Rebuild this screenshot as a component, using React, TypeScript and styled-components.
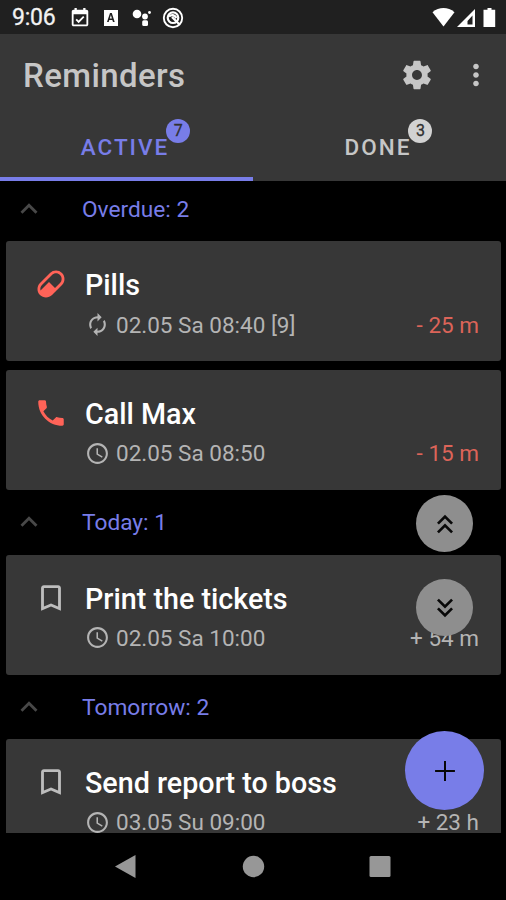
import React from 'react';
import styled, { createGlobalStyle } from 'styled-components';

const colors = {
  accent: '#787de8',
  surface: '#373737',
  statusBar: '#202020',
  muted: '#c6c6c6',
  secondary: '#b4b4b4',
  danger: '#ff6358',
  dangerText: '#dc6459',
};

const GlobalStyle = createGlobalStyle`
  *, *::before, *::after { box-sizing: border-box; }
  body { margin: 0; background: #000; }
`;

const Screen = styled.div`
  position: relative;
  display: flex;
  flex-direction: column;
  width: 506px;
  height: 900px;
  overflow: hidden;
  background: #000;
  font-family: Roboto, 'Liberation Sans', sans-serif;
`;

const Icon = styled.svg<{ $size: number }>`
  display: block;
  flex: none;
  width: ${(p) => p.$size}px;
  height: ${(p) => p.$size}px;
  fill: currentColor;
`;

const StatusBar = styled.header`
  display: flex;
  align-items: center;
  height: 34px;
  flex: none;
  padding: 1px 5px 0 12px;
  background: ${colors.statusBar};
  color: #fff;
`;

const Clock = styled.span`
  width: 57px;
  font-size: 23px;
  line-height: 32px;
  letter-spacing: -0.2px;
  color: #f2f2f2;
  -webkit-text-stroke: 0.3px #f2f2f2;
`;

const Notifications = styled.div`
  display: flex;
  align-items: center;
  flex: 1;
  gap: 9px;
`;

const StatusIcons = styled.div`
  display: flex;
  align-items: center;
  gap: 1px;
`;

const Toolbar = styled.div`
  display: flex;
  align-items: center;
  height: 79px;
  flex: none;
  padding: 3px 13px 0 23px;
  background: ${colors.surface};
  color: ${colors.muted};
`;

const Title = styled.h1`
  flex: 1;
  margin: 0;
  font-size: 33px;
  font-weight: 500;
  letter-spacing: 0.4px;
`;

const Actions = styled.div`
  display: flex;
  align-items: center;
  gap: 25px;
`;

const Tabs = styled.nav`
  display: flex;
  height: 68px;
  flex: none;
  background: ${colors.surface};
`;

const Tab = styled.div<{ $active?: boolean }>`
  display: flex;
  justify-content: center;
  align-items: center;
  flex: 1;
  padding: 3px 3px 0 0;
  color: ${(p) => (p.$active ? colors.accent : colors.muted)};
  border-bottom: 4px solid ${(p) => (p.$active ? colors.accent : 'transparent')};
`;

const TabLabel = styled.span`
  position: relative;
  font-size: 22.5px;
  font-weight: 500;
  line-height: 26px;
  letter-spacing: 2px;
`;

const Badge = styled.span<{ $active?: boolean }>`
  position: absolute;
  left: calc(100% - 3px);
  top: -15px;
  width: 24px;
  height: 24px;
  border-radius: 50%;
  background: ${(p) => (p.$active ? colors.accent : '#d2d2d2')};
  color: #303030;
  font-size: 16px;
  font-weight: 400;
  line-height: 24px;
  letter-spacing: 0;
  text-align: center;
  -webkit-text-stroke: 0.3px #303030;
`;

const List = styled.main`
  flex: none;
  height: 652px;
  overflow: hidden;
`;

const SectionHeader = styled.div`
  display: flex;
  align-items: center;
  height: 56px;
  padding-left: 12px;
  color: #484848;
`;

const SectionTitle = styled.h2`
  margin: 1px 0 0 36px;
  color: ${colors.accent};
  font-size: 22.7px;
  font-weight: 400;
`;

const Card = styled.article`
  display: grid;
  grid-template-columns: 51px 1fr;
  height: 120.2px;
  margin: 4.2px 5px 4.2px 6px;
  padding: 26px 22px 0 28px;
  border-radius: 3px;
  background: ${colors.surface};

  & + & {
    margin-top: 8.6px;
  }
`;

const TypeIcon = styled.div<{ $danger?: boolean }>`
  color: ${(p) => (p.$danger ? colors.danger : '#bdbdbd')};
`;

const CardTitle = styled.div`
  color: #fff;
  font-size: 28.7px;
  font-weight: 500;
  line-height: 36px;
`;

const Meta = styled.div`
  display: flex;
  align-items: center;
  height: 30px;
  margin-top: 6.4px;
  color: ${colors.secondary};
  font-size: 22.5px;
`;

const When = styled.span`
  flex: 1;
  margin-left: 6px;
`;

const Remaining = styled.span<{ $danger?: boolean }>`
  color: ${(p) => (p.$danger ? colors.dangerText : colors.secondary)};
`;

const NavBar = styled.footer`
  display: flex;
  justify-content: center;
  align-items: center;
  gap: 92px;
  flex: 1;
  color: #979797;
`;

const FloatingButtons = styled.div`
  position: absolute;
  right: 22px;
  top: 495px;
  display: flex;
  flex-direction: column;
  align-items: center;
  gap: 27px;
`;

const RoundButton = styled.button<{ $primary?: boolean }>`
  display: flex;
  justify-content: center;
  align-items: center;
  width: ${(p) => (p.$primary ? 79 : 57)}px;
  height: ${(p) => (p.$primary ? 79 : 57)}px;
  margin: ${(p) => (p.$primary ? '68px 0 0' : '0')};
  padding: 0;
  border: 0;
  border-radius: 50%;
  background: ${(p) => (p.$primary ? colors.accent : '#8e8e8e')};
  color: #080808;
`;

const paths = {
  pill: 'M4.22,11.29L11.29,4.22C13.64,1.88 17.43,1.88 19.78,4.22C22.12,6.56 22.12,10.36 19.78,12.71L12.71,19.78C10.36,22.12 6.56,22.12 4.22,19.78C1.88,17.43 1.88,13.64 4.22,11.29M5.64,12.71C4.59,13.75 4.24,15.24 4.6,16.57L10.59,10.59L14.83,14.83L18.36,11.29C19.93,9.73 19.93,7.2 18.36,5.64C16.8,4.07 14.27,4.07 12.71,5.64L5.64,12.71Z',
  call: 'M6.62 10.79c1.44 2.83 3.76 5.14 6.59 6.59l2.2-2.2c.27-.27.67-.36 1.02-.24 1.12.37 2.33.57 3.57.57.55 0 1 .45 1 1V20c0 .55-.45 1-1 1-9.39 0-17-7.61-17-17 0-.55.45-1 1-1h3.5c.55 0 1 .45 1 1 0 1.25.2 2.45.57 3.57.11.35.03.74-.25 1.02l-2.2 2.2z',
  bookmark: 'M17 3H7c-1.1 0-2 .9-2 2v16l7-3 7 3V5c0-1.1-.9-2-2-2zm0 15l-5-2.18L7 18V5h10v13z',
  repeat: 'M12 6v3l4-4-4-4v3c-4.42 0-8 3.58-8 8 0 1.57.46 3.03 1.24 4.26L6.7 14.8A5.87 5.87 0 0 1 6 12c0-3.31 2.69-6 6-6zm6.76 1.74L17.3 9.2c.44.84.7 1.79.7 2.8 0 3.31-2.69 6-6 6v-3l-4 4 4 4v-3c4.42 0 8-3.58 8-8 0-1.57-.46-3.03-1.24-4.26z',
  time: 'M11.99 2C6.47 2 2 6.48 2 12s4.47 10 9.99 10C17.52 22 22 17.52 22 12S17.52 2 11.99 2zM12 20c-4.42 0-8-3.58-8-8s3.58-8 8-8 8 3.58 8 8-3.58 8-8 8zm.5-13H11v6l5.25 3.15.75-1.23-4.5-2.67z',
  up: 'M12 8l-6 6 1.41 1.41L12 10.83l4.59 4.58L18 14z',
  settings: 'M19.43 12.98c.04-.32.07-.64.07-.98s-.03-.66-.07-.98l2.11-1.65c.19-.15.24-.42.12-.64l-2-3.46c-.12-.22-.39-.3-.61-.22l-2.49 1c-.52-.4-1.08-.73-1.69-.98l-.38-2.65C14.46 2.18 14.25 2 14 2h-4c-.25 0-.46.18-.49.42l-.38 2.65c-.61.25-1.17.59-1.69.98l-2.49-1c-.23-.09-.49 0-.61.22l-2 3.46c-.13.22-.07.49.12.64l2.11 1.65c-.04.32-.07.65-.07.98s.03.66.07.98l-2.11 1.65c-.19.15-.24.42-.12.64l2 3.46c.12.22.39.3.61.22l2.49-1c.52.4 1.08.73 1.69.98l.38 2.65c.03.24.24.42.49.42h4c.25 0 .46-.18.49-.42l.38-2.65c.61-.25 1.17-.59 1.69-.98l2.49 1c.23.09.49 0 .61-.22l2-3.46c.12-.22.07-.49-.12-.64l-2.11-1.65zM12 15.5c-1.93 0-3.5-1.57-3.5-3.5s1.57-3.5 3.5-3.5 3.5 1.57 3.5 3.5-1.57 3.5-3.5 3.5z',
  more: 'M12 8c1.1 0 2-.9 2-2s-.9-2-2-2-2 .9-2 2 .9 2 2 2zm0 2c-1.1 0-2 .9-2 2s.9 2 2 2 2-.9 2-2-.9-2-2-2zm0 6c-1.1 0-2 .9-2 2s.9 2 2 2 2-.9 2-2-.9-2-2-2z',
  doubleUp: 'M6 17.59L7.41 19 12 14.42 16.59 19 18 17.59l-6-6zM6 11l1.41 1.41L12 7.83l4.59 4.58L18 11l-6-6z',
  doubleDown: 'M18 6.41L16.59 5 12 9.58 7.41 5 6 6.41l6 6zM18 13l-1.41-1.41L12 16.17l-4.59-4.58L6 13l6 6z',
  add: 'M19 12.7h-6.3V19h-1.4v-6.3H5v-1.4h6.3V5h1.4v6.3H19z',
  calendar: 'M16.8 11.3L15.4 9.9l-4.9 4.9-2-2-1.4 1.4 3.4 3.4zM19 3h-1V1h-2.5v2h-7V1H6v2H5c-1.1 0-2 .9-2 2v14c0 1.1.9 2 2 2h14c1.1 0 2-.9 2-2V5c0-1.1-.9-2-2-2zm0 16H5V8h14v11z',
};

type PathName = keyof typeof paths;

const Glyph = ({ name, size = 34 }: { name: PathName; size?: number }) => (
  <Icon $size={size} viewBox="0 0 24 24" aria-hidden="true">
    <path d={paths[name]} />
  </Icon>
);

interface Reminder {
  icon: PathName;
  title: string;
  when: string;
  left: string;
  repeat?: boolean;
  overdue?: boolean;
}

const sections: { title: string; items: Reminder[] }[] = [
  {
    title: 'Overdue: 2',
    items: [
      { icon: 'pill', title: 'Pills', when: '02.05 Sa 08:40 [9]', left: '- 25 m', repeat: true, overdue: true },
      { icon: 'call', title: 'Call Max', when: '02.05 Sa 08:50', left: '- 15 m', overdue: true },
    ],
  },
  { title: 'Today: 1', items: [{ icon: 'bookmark', title: 'Print the tickets', when: '02.05 Sa 10:00', left: '+ 54 m' }] },
  { title: 'Tomorrow: 2', items: [{ icon: 'bookmark', title: 'Send report to boss', when: '03.05 Su 09:00', left: '+ 23 h' }] },
];

export default function App() {
  return (
    <Screen>
      <GlobalStyle />
      <StatusBar>
        <Clock>9:06</Clock>
        <Notifications>
          <Glyph name="calendar" size={22} />
          <Icon $size={22} viewBox="0 0 22 22">
            <path fillRule="evenodd" d="M4 3h14v16H4zM10 6 7 15h1.7l.6-2h3l.7 2h1.7L11.8 6zm.9 2 1 3.6H9.8z" />
          </Icon>
          <Icon $size={22} viewBox="0 0 22 22">
            <circle cx="6" cy="7" r="4.3" />
            <circle cx="14" cy="9.5" r="2.9" />
            <circle cx="18.5" cy="5.5" r="1.4" />
            <rect x="11.2" y="13.2" width="5.8" height="5.8" rx="1.5" />
          </Icon>
          <Icon $size={22} viewBox="0 0 22 22">
            <g fill="none" stroke="currentColor">
              <circle cx="11" cy="11" r="9.2" strokeWidth="1.9" />
              <circle cx="11" cy="10.7" r="5.3" strokeWidth="2.2" />
              <path d="M7 9.5q4-3.5 7.5 1.5M10 10l7.5 7.5" strokeWidth="2.3" />
            </g>
          </Icon>
        </Notifications>
        <StatusIcons>
          <Icon $size={23} viewBox="0 0 23 23">
            <path d="M.5 6.2C7 .7 16 .7 22.5 6.2L11.5 20.5z" />
          </Icon>
          <Icon $size={22} viewBox="0 0 22 22">
            <path fillRule="evenodd" d="M19 2v18H1zM16.5 8.5 11.5 14v3.5h5z" />
          </Icon>
          <Icon $size={22} viewBox="0 0 22 22">
            <path d="M8.5 1h4v1.8h3.7V20H4.5V2.8h4z" />
          </Icon>
        </StatusIcons>
      </StatusBar>
      <Toolbar>
        <Title>Reminders</Title>
        <Actions>
          <Glyph name="settings" />
          <Glyph name="more" />
        </Actions>
      </Toolbar>
      <Tabs>
        <Tab $active>
          <TabLabel>
            ACTIVE<Badge $active>7</Badge>
          </TabLabel>
        </Tab>
        <Tab>
          <TabLabel>
            DONE<Badge>3</Badge>
          </TabLabel>
        </Tab>
      </Tabs>
      <List>
        {sections.map((section) => (
          <section key={section.title}>
            <SectionHeader>
              <Glyph name="up" />
              <SectionTitle>{section.title}</SectionTitle>
            </SectionHeader>
            {section.items.map((item) => (
              <Card key={item.title}>
                <TypeIcon $danger={item.overdue}>
                  <Glyph name={item.icon} />
                </TypeIcon>
                <div>
                  <CardTitle>{item.title}</CardTitle>
                  <Meta>
                    <Glyph name={item.repeat ? 'repeat' : 'time'} size={25} />
                    <When>{item.when}</When>
                    <Remaining $danger={item.overdue}>{item.left}</Remaining>
                  </Meta>
                </div>
              </Card>
            ))}
          </section>
        ))}
      </List>
      <NavBar>
        <Icon $size={35} viewBox="0 0 35 35">
          <path d="M6 17.5 26.5 6v23z" />
        </Icon>
        <Icon $size={35} viewBox="0 0 35 35">
          <circle cx="17.5" cy="17.5" r="10.7" />
        </Icon>
        <Icon $size={35} viewBox="0 0 35 35">
          <rect x="6.5" y="7" width="21" height="21" rx="1.5" />
        </Icon>
      </NavBar>
      <FloatingButtons>
        <RoundButton aria-label="Scroll up">
          <Glyph name="doubleUp" size={32} />
        </RoundButton>
        <RoundButton aria-label="Scroll down">
          <Glyph name="doubleDown" size={32} />
        </RoundButton>
        <RoundButton $primary aria-label="Add reminder">
          <Glyph name="add" size={34} />
        </RoundButton>
      </FloatingButtons>
    </Screen>
  );
}
